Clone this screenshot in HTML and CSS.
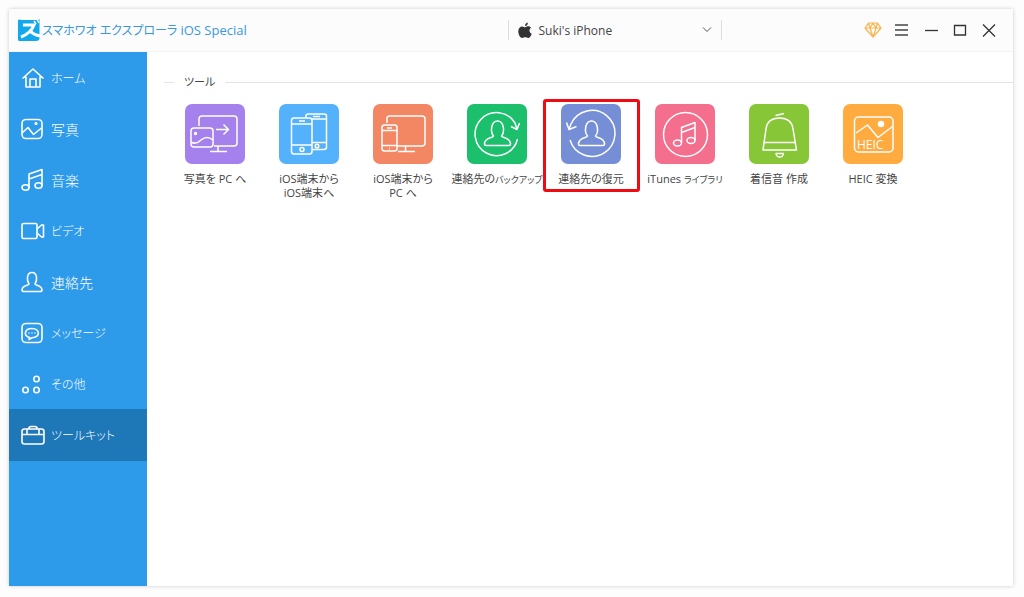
FILE: index.html
```
<!DOCTYPE html>
<html lang="ja">
<head>
    <meta charset="utf-8">
    <title>スマホワオ エクスプローラ iOS Special</title>
    <link rel="stylesheet" href="styles.css">
</head>
<body>
    <div class="window">
        <header class="titlebar">
            <div class="brand">
                <svg class="logo" width="24" height="24" viewBox="0 0 24 24">
                    <path fill="#12a8ec" d="M1 2 Q2 1 5 2 H21 L22.500 1 V21 Q22 23 19 23 H2 Q1 23 1 21 Z"/>
                    <path fill="none" stroke="#fff" stroke-width="3" d="M6 7 H17 Q14 15 4 19 M13 13 Q17 17 23 18"/>
                    <path fill="none" stroke="#fff" stroke-width="1.500" d="M17 3 L19 6 M20 1 L22 5"/>
                </svg>
                <h1>スマホワオ エクスプローラ <span>iOS Special</span></h1>
            </div>
            <button class="device">
                <svg width="14" height="17" viewBox="0 0 14 17" fill="#333">
                    <path d="M9.8 0.5 Q10 3.6 7 4 Q7 1.2 9.8 0.5 Z"/>
                    <path d="M7 5.2 C8 5 8.600 4.300 10.300 4.300 C11.500 4.300 12.600 4.900 13.200 5.800 C10.700 7.200 11.100 10.600 13.700 11.700 C12.900 14 11.700 16 10.200 16 C9 16 8.500 15.300 7.200 15.300 C5.900 15.300 5.300 16 4.200 16 C2 16 0.300 12.400 0.300 9.300 C0.300 6 2.200 4.400 4.200 4.400 C5.500 4.400 6.200 5.200 7 5.200 Z"/>
                </svg>
                <span class="device-name">Suki's iPhone</span>
                <svg width="10" height="6" viewBox="0 0 10 6" fill="none" stroke="#555"><path d="M1 0.500 L5 4.500 L9 0.500"/></svg>
            </button>
            <div class="controls">
                <button aria-label="アップグレード">
                    <svg width="18" height="18" viewBox="0 0 18 18" fill="none" stroke="#f7b450" stroke-width="1.200" stroke-linejoin="round">
                        <path d="M4.500 2 H13.500 L17 7 L9 16 L1 7 Z M1 7 H17 M4.500 2 L6 7 L9 16 L12 7 L13.500 2 M6 7 L9 2 L12 7"/>
                    </svg>
                </button>
                <button aria-label="メニュー">
                    <svg width="18" height="18" viewBox="0 0 18 18" stroke="#444" stroke-width="1.300"><path d="M2 4 H15 M2 9 H15 M2 14 H15"/></svg>
                </button>
                <button aria-label="最小化">
                    <svg width="18" height="18" viewBox="0 0 18 18" stroke="#333" stroke-width="1.300"><path d="M3 9.500 H16"/></svg>
                </button>
                <button aria-label="最大化">
                    <svg width="18" height="18" viewBox="0 0 18 18" fill="none" stroke="#333" stroke-width="1.300"><path d="M3.500 4.500 H14.500 V14 H3.500 Z"/></svg>
                </button>
                <button aria-label="閉じる">
                    <svg width="18" height="18" viewBox="0 0 18 18" stroke="#333" stroke-width="1.300"><path d="M3 3.500 L15 15.500 M15 3.500 L3 15.500"/></svg>
                </button>
            </div>
        </header>

        <div class="main">
            <nav class="sidebar">
                <a href="#" class="kana">
                    <svg width="24" height="24" viewBox="0 0 24 24"><path d="M1.500 12.500 L12 3 L22.500 12.500 M5 10.500 V21 H19 V10.500 M9 21 V13 H15 V21"/></svg>
                    ホーム
                </a>
                <a href="#">
                    <svg width="24" height="24" viewBox="0 0 24 24"><rect x="1" y="2.500" width="20" height="19" rx="4"/><path d="M1 16 L7 10.500 L12.500 17.500 L20.500 11"/><circle cx="15" cy="6.500" r="0.800"/></svg>
                    写真
                </a>
                <a href="#">
                    <svg width="24" height="24" viewBox="0 0 24 24"><ellipse cx="4.500" cy="19.500" rx="3.500" ry="2.700"/><ellipse cx="17.500" cy="17.500" rx="3.500" ry="2.700"/><path d="M8 19.500 V6 L21 1.500 V17.500 M8 11 L21 6.500"/></svg>
                    音楽
                </a>
                <a href="#" class="kana">
                    <svg width="24" height="24" viewBox="0 0 24 24"><rect x="1" y="4.500" width="15" height="15" rx="1.500"/><path d="M16 10 L20.500 6 H22.500 V18 H20.500 L16 14"/></svg>
                    ビデオ
                </a>
                <a href="#">
                    <svg width="24" height="24" viewBox="0 0 24 24"><path d="M8 14 C5.500 10.500 5.500 2.500 11 2.500 C16.500 2.500 16.500 10.500 14 14 C14 15.500 21 15 21 20 Q21 21.500 19 21.500 H3 Q1 21.500 1 20 C1 15 8 15.500 8 14 Z"/></svg>
                    連絡先
                </a>
                <a href="#" class="kana">
                    <svg width="24" height="24" viewBox="0 0 24 24"><rect x="1" y="2.500" width="20" height="19" rx="4"/><path d="M8.500 16.500 C2 14.500 3.500 7.500 11 7.500 C19 7.500 20 16.500 11 16.800 L8 18.500 Z M7.500 12 H8.500 M10.500 12 H11.500 M13.500 12 H14.500"/></svg>
                    メッセージ
                </a>
                <a href="#" class="kana">
                    <svg width="24" height="24" viewBox="0 0 24 24"><circle cx="15.500" cy="7" r="2.700"/><circle cx="4.500" cy="18" r="2.700"/><circle cx="15.500" cy="18" r="2.700"/></svg>
                    その他
                </a>
                <a href="#" class="kana active">
                    <svg width="24" height="24" viewBox="0 0 24 24"><rect x="1" y="6" width="22" height="15" rx="2.500"/><path d="M1 11.500 H23 M6 11 V6 M18 11 V6 M7.500 6 Q8 3.500 10 3.500 H14 Q16 3.500 16.500 6"/></svg>
                    ツールキット
                </a>
            </nav>

            <main class="content">
                <h2 class="section-title">ツール</h2>
                <div class="tools">
                    <button class="tool">
                        <svg class="purple" width="60" height="60" viewBox="0 0 60 60">
                            <path d="M14 22 V15 Q14 12 17 12 H49 Q52 12 52 15 V39 Q52 42 49 42 H29 M33 42 V47 M25 47.500 H42 M31 25.500 H43 M38.500 20.500 L43.500 25.500 L38.500 30.500"/>
                            <rect x="6" y="24" width="22" height="19" rx="3"/>
                            <path d="M6 38 Q11 41 16 36 Q22 31 28 36"/><circle cx="10.500" cy="29.500" r="1"/>
                        </svg>
                        <span>写真を PC へ</span>
                    </button>
                    <button class="tool">
                        <svg class="blue" width="60" height="60" viewBox="0 0 60 60">
                            <path d="M27 14 V12 Q27 10 29 10 H45 Q47.500 10 47.500 12 V43 Q47.500 45.500 45 45.500 H33 M32 15 H47 M33 38.500 H47 M34 12.500 H41"/><circle cx="38" cy="42" r="1.800"/>
                            <rect x="12.500" y="14" width="20.500" height="36" rx="2.500"/><path d="M12.500 20 H33 M12.500 41 H33 M20 17 H26"/><circle cx="23" cy="45.500" r="2"/>
                        </svg>
                        <span>iOS端末から<br>iOS端末へ</span>
                    </button>
                    <button class="tool">
                        <svg class="orange" width="60" height="60" viewBox="0 0 60 60">
                            <path d="M14 19 V14 Q14 12 17 12 H49 Q52 12 52 15 V39 Q52 42 49 42 H24 M32.500 42 V47 M25 47.500 H42"/>
                            <rect x="9" y="21" width="15" height="26" rx="2.500"/><path d="M9 26.500 H24 M9 41.500 H24 M14 24 H19 M16 44.500 H17"/>
                        </svg>
                        <span>iOS端末から<br>PC へ</span>
                    </button>
                    <button class="tool">
                        <svg class="green" width="60" height="60" viewBox="0 0 60 60">
                            <path d="M50.500 35 A21.500 21.500 0 1 1 48 19 L50 25 M44 22.500 L50 25.500 L52.500 19"/>
                            <path d="M26.500 32 C23 28 24 17 30.500 17 C37 17 38 28 34.500 32 C34.500 34 43.500 33 43.500 40 Q43.500 41.500 42 41.500 H19 Q17.500 41.500 17.500 40 C17.500 33 26.500 34 26.500 32 Z"/>
                        </svg>
                        <span>連絡先の<small>バックアップ</small></span>
                    </button>
                    <button class="tool highlight">
                        <svg class="indigo" width="60" height="60" viewBox="0 0 60 60">
                            <path d="M9 36 A23 23 0 1 0 10 20 L8 25 M5.500 18.500 L8 25.500 L15.500 22.500"/>
                            <path d="M26.500 32 C23 28 24 17 30.500 17 C37 17 38 28 34.500 32 C34.500 34 43.500 33 43.500 40 Q43.500 41.500 42 41.500 H19 Q17.500 41.500 17.500 40 C17.500 33 26.500 34 26.500 32 Z"/>
                        </svg>
                        <span>連絡先の復元</span>
                    </button>
                    <button class="tool">
                        <svg class="pink" width="60" height="60" viewBox="0 0 60 60">
                            <circle cx="30.500" cy="30.500" r="22"/>
                            <ellipse cx="22.500" cy="39" rx="4" ry="3"/><ellipse cx="36" cy="36.500" rx="4" ry="3"/><path d="M26.500 39 V23.500 L40 18.500 V36.500 M26.500 28.500 L40 23.500"/>
                        </svg>
                        <span>iTunes <small>ライブラリ</small></span>
                    </button>
                    <button class="tool">
                        <svg class="lime" width="60" height="60" viewBox="0 0 60 60">
                            <path d="M14 46 L17 25 C18 17 23 14 30.500 14 C38 14 43 17 44 25 L47.500 46 Z M15 38.500 H46.500 M26.500 11.500 L35 9.500 M27 49.500 H34.500 Q34 53 30.700 53 Q27.500 53 27 49.500 Z"/>
                        </svg>
                        <span>着信音 作成</span>
                    </button>
                    <button class="tool">
                        <svg class="amber" width="60" height="60" viewBox="0 0 60 60">
                            <rect x="11.500" y="13" width="38.500" height="35" rx="4"/><path d="M13 29 L24.500 21 L35 33.500 L49.500 22.500"/>
                            <circle class="dot" cx="38" cy="20" r="2.500"/><text x="14" y="45">HEIC</text>
                        </svg>
                        <span>HEIC 変換</span>
                    </button>
                </div>
            </main>
        </div>
    </div>
</body>
</html>
```
FILE: styles.css
```
* {
    box-sizing: border-box;
}
body {
    margin: 0;
    padding: 9px 11px 11px 9px;
    height: 100vh;
    background-color: #fdfdfd;
    font-family: "Open Sans", "Noto Sans CJK JP", sans-serif;
    font-feature-settings: "palt";
    color: #444;
}
button {
    font: inherit;
    font-feature-settings: inherit;
    color: inherit;
    background: none;
    border: none;
    padding: 0;
    cursor: pointer;
}
.window {
    display: flex;
    flex-direction: column;
    height: 100%;
    background-color: #fff;
    box-shadow: 0 0 4px rgba(0, 0, 0, 0.2);
}

/* title bar */
.titlebar {
    display: grid;
    grid-template-columns: 16fr 7fr 9fr;
    align-items: center;
    height: 43px;
    padding: 0 15px 0 8px;
    background-color: #fcfcfc;
    border-bottom: 1px solid #f3f3f3;
}
.brand {
    display: flex;
    align-items: center;
    gap: 1px;
}
.brand h1 {
    margin: 0;
    font-size: 12px;
    font-weight: normal;
    color: #3b97dc;
    white-space: nowrap;
}
.brand span {
    font-size: 13px;
}
.device {
    display: flex;
    align-items: center;
    gap: 7px;
    height: 20px;
    padding: 0 9px;
    border-left: 1px solid #ddd;
    border-right: 1px solid #ddd;
    font-size: 12px;
}
.device-name {
    flex: 1;
    text-align: left;
}
.controls {
    display: flex;
    justify-content: flex-end;
    gap: 11px;
}
.controls svg {
    display: block;
}

.main {
    display: flex;
    flex: 1;
}
.sidebar {
    width: 138px;
    background-color: #2d9aea;
}
.sidebar a {
    display: flex;
    align-items: center;
    gap: 6px;
    height: 51px;
    padding-left: 12px;
    font-size: 14px;
    font-weight: 300;
    color: #fff;
    text-decoration: none;
}
.sidebar a.kana {
    font-size: 12px;
}
.sidebar a.active {
    height: 52px;
    background-color: #1e77b7;
}
.sidebar svg {
    fill: none;
    stroke: #fff;
    stroke-width: 1.6;
    stroke-linejoin: round;
}

.content {
    flex: 1;
    padding: 20px 0 0 17px;
}
.section-title {
    display: flex;
    align-items: center;
    gap: 10px;
    margin: 0;
    font-size: 11px;
    font-weight: normal;
    line-height: 20px;
}
.section-title::before,
.section-title::after {
    content: "";
    width: 10px;
    height: 1px;
    background-color: #e4e4e4;
}
.section-title::after {
    flex: 1;
}
.tools {
    display: flex;
    flex-wrap: wrap;
    padding: 12px 0 0 4px;
}
.tool {
    display: flex;
    flex-direction: column;
    align-items: center;
    align-self: flex-start;
    position: relative;
    width: 94px;
    font-size: 11px;
    line-height: 14px;
    white-space: nowrap;
}
.tool small {
    font-size: 9px;
}
.tool svg {
    margin-bottom: 8px;
    border-radius: 7px;
    fill: none;
    stroke: #fff;
    stroke-width: 1.5;
    stroke-linejoin: round;
}
.tool .dot {
    fill: #fff;
}
.tool text {
    fill: #fff;
    stroke: none;
    font-size: 12px;
}
.highlight::after {
    content: "";
    position: absolute;
    inset: -5px -2px -6px -1px;
    border: 3px solid #f00a12;
    border-radius: 3px;
}
.purple { background-color: #a481ec; }
.blue { background-color: #53b2fb; }
.orange { background-color: #f38764; }
.green { background-color: #1bbf6c; }
.indigo { background-color: #768ed6; }
.pink { background-color: #f36f8d; }
.lime { background-color: #87c637; }
.amber { background-color: #ffab40; }
```
